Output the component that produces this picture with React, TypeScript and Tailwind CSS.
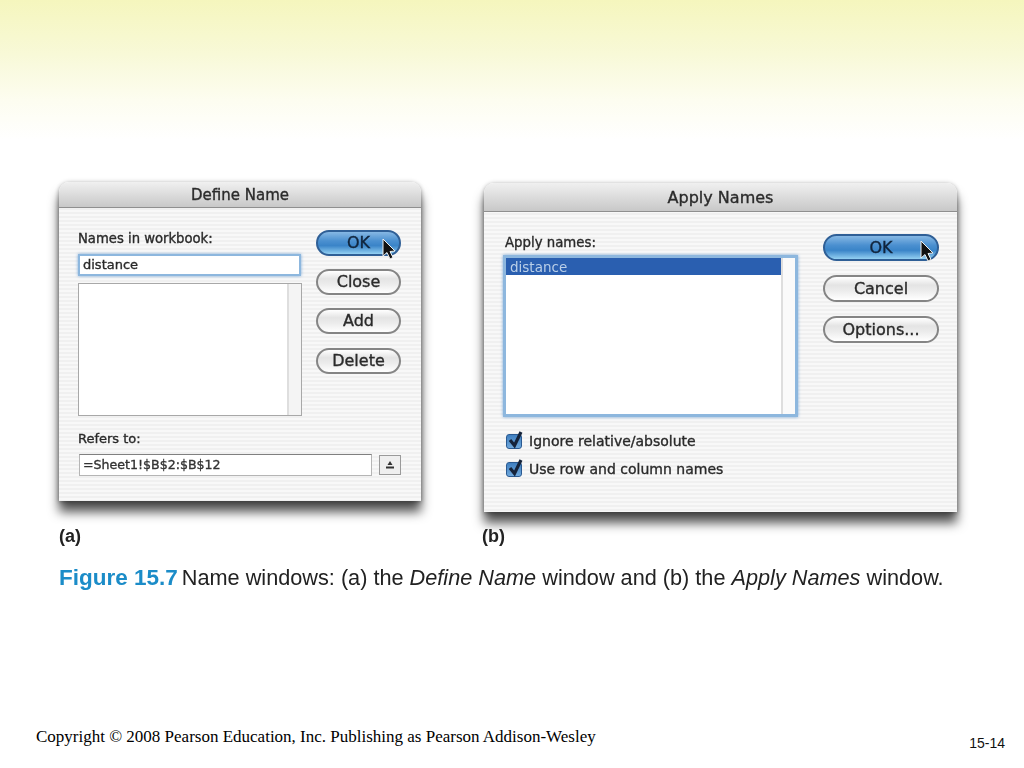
import React from 'react';

const ui = 'font-["DejaVu_Sans",sans-serif] [-webkit-text-stroke-width:0.35px]';
const stripes =
  'bg-[repeating-linear-gradient(180deg,#f8f8f8_0px,#f8f8f8_2px,#f0f0f0_2px,#f0f0f0_4px)]';
const windowShadow = 'shadow-[0_11px_11px_rgba(0,0,0,0.68),0_1px_5px_rgba(0,0,0,0.4)]';

const Cursor = ({ className }: { className: string }) => (
  <svg viewBox="0 0 16 24" className={`absolute ${className}`}>
    <path d="M2 1 L2 18 L6 14.5 L9 21 L12 19.5 L9 13.5 L14 13 Z" fill="#111" stroke="#eee" strokeWidth="1" />
  </svg>
);

const PillButton = ({ label, primary, className }: { label: string; primary?: boolean; className: string }) => (
  <div
    className={`relative flex items-center justify-center rounded-full border-2 text-[16px] ${className} ${
      primary
        ? 'border-[#2f5f96] bg-[linear-gradient(180deg,#86b8e4_0%,#4b90d0_40%,#3a84c8_62%,#93d0f2_100%)] text-[#10243c]'
        : 'border-[#858585] bg-[linear-gradient(180deg,#ffffff_0%,#e4e4e4_35%,#ececec_60%,#ffffff_100%)] text-[#2a2a2a]'
    }`}
  >
    {label}
  </div>
);

const CheckRow = ({ label }: { label: string }) => (
  <div className="flex h-[17px] items-center gap-[7px]">
    <div className="relative h-[15px] w-[16px] rounded-[3px] border border-[#2a5a92] bg-[linear-gradient(180deg,#3f7fc0_0%,#6fa8dc_100%)]">
      <svg viewBox="0 0 16 19" className="absolute left-0 top-[-5px] h-[19px] w-[16px]">
        <path d="M3 10 L7.5 15.5 L14 2" fill="none" stroke="#15233a" strokeWidth="3.2" />
      </svg>
    </div>
    <span className="text-[14px] text-[#2a2a2a]">{label}</span>
  </div>
);

const DefineName = () => (
  <div className={`flex h-[319px] w-[362px] shrink-0 flex-col rounded-t-[10px] ${windowShadow} ${stripes}`}>
    <div className="flex h-[26px] shrink-0 items-center justify-center rounded-t-[10px] border-b border-[#8f8f8f] bg-[linear-gradient(180deg,#f0f0f0_0%,#c8c8c8_100%)] pt-[2px] text-[15px] text-[#2b2b2b]">
      Define Name
    </div>
    <div className="flex flex-col pl-[19px] pr-[20px]">
      <div className="flex justify-between">
        <div className="w-[224px]">
          <div className="mt-[23px] text-[13.2px] leading-[16px] text-[#2a2a2a]">Names in workbook:</div>
          <div className="mt-[7px] flex h-[22px] w-[223px] items-center border-2 border-[#8db7de] bg-white pl-[3px] text-[13px] text-[#2a2a2a] shadow-[0_0_3px_#7aa8d8]">
            distance
          </div>
          <div className="mt-[7px] flex h-[133px] w-[224px] justify-end border border-[#a8a8a8] bg-white">
            <div className="w-[14px] border-l-2 border-[#dedede] bg-[#f4f4f4]" />
          </div>
        </div>
        <div className="flex w-[85px] flex-col gap-[13px] pt-[22px]">
          <PillButton primary label="OK" className="h-[26px] w-[85px]" />
          <PillButton label="Close" className="h-[26px] w-[85px]" />
          <PillButton label="Add" className="h-[26px] w-[85px]" />
          <PillButton label="Delete" className="mt-[1px] h-[26px] w-[85px]" />
        </div>
      </div>
      <div className="mt-[15px] text-[13px] leading-[16px] text-[#2a2a2a]">Refers to:</div>
      <div className="mt-[7px] flex items-center justify-between pl-[1px]">
        <div className="flex h-[22px] w-[293px] items-center border border-[#b5b5b5] border-t-[#808080] bg-white pl-[3px] text-[12.6px] text-[#333333]">
          =Sheet1!$B$2:$B$12
        </div>
        <div className="flex h-[20px] w-[22px] items-center justify-center border border-[#9a9a9a] bg-[#efefef]">
          <svg viewBox="0 0 12 10" className="h-[10px] w-[12px]">
            <path d="M6 1 L8.5 5 L3.5 5 Z" fill="#333" />
            <path d="M2 6.5 H10 V8.5 H2 Z" fill="#333" />
          </svg>
        </div>
      </div>
    </div>
  </div>
);

const ApplyNames = () => (
  <div className={`flex h-[329px] w-[473px] shrink-0 flex-col rounded-t-[10px] ${windowShadow} ${stripes}`}>
    <div className="flex h-[29px] shrink-0 items-center justify-center rounded-t-[10px] border-b border-[#8f8f8f] bg-[linear-gradient(180deg,#f0f0f0_0%,#c8c8c8_100%)] pt-[2px] text-[16px] text-[#2b2b2b]">
      Apply Names
    </div>
    <div className="flex justify-between pl-[19px] pr-[18px]">
      <div className="w-[295px]">
        <div className="ml-[2px] mt-[23px] text-[13.3px] leading-[16px] text-[#2a2a2a]">Apply names:</div>
        <div className="mt-[4px] flex h-[162px] w-[295px] justify-between border-[3px] border-[#8db7de] bg-white shadow-[0_0_3px_#7aa8d8]">
          <div className="h-[17px] w-[275px] bg-[#2a5fb0] pl-[4px] text-[13.5px] leading-[19px] text-[#b9cfe8] [-webkit-text-stroke-width:0px]">
            distance
          </div>
          <div className="w-[14px] border-l-2 border-[#dedede] bg-[#fafafa]" />
        </div>
        <div className="mt-[16px] flex flex-col gap-[11px] pl-[3px]">
          <CheckRow label="Ignore relative/absolute" />
          <CheckRow label="Use row and column names" />
        </div>
      </div>
      <div className="flex w-[116px] flex-col gap-[14px] pt-[22px]">
        <PillButton primary label="OK" className="h-[27px] w-[116px]" />
        <PillButton label="Cancel" className="h-[27px] w-[116px]" />
        <PillButton label="Options..." className="h-[27px] w-[116px]" />
      </div>
    </div>
  </div>
);

export default function App() {
  return (
    <div className="relative flex h-[768px] w-[1024px] flex-col overflow-hidden bg-[linear-gradient(180deg,#f5f6bd_0px,#f8f9d8_55px,#fdfdf0_100px,#ffffff_140px)]">
      <div className={`flex items-start pl-[59px] pt-[182px] blur-[0.4px] ${ui}`}>
        <DefineName />
        <div className="ml-[63px] mt-[1px]">
          <ApplyNames />
        </div>
      </div>
      <Cursor className="left-[381px] top-[238px] h-[24px] w-[16px]" />
      <Cursor className="left-[919px] top-[240px] h-[24px] w-[16px]" />

      <div className='mt-[14px] flex pl-[59px] font-["Liberation_Sans",sans-serif] text-[18px] leading-[20px] font-bold text-[#222222] blur-[0.3px]'>
        <span className="w-[423px]">(a)</span>
        <span>(b)</span>
      </div>
      <div className='mt-[20px] whitespace-nowrap pl-[59px] font-["Liberation_Sans",sans-serif] text-[21.7px] leading-[24px] text-[#222222] blur-[0.3px]'>
        <span className="mr-[4px] text-[22.5px] font-bold text-[#1b8cc8]">Figure 15.7</span>
        Name windows: (a) the <i>Define Name</i> window and (b) the <i>Apply Names</i> window.
      </div>

      <div className="mt-auto flex items-end justify-between pb-[17px] pl-[36px] pr-[19px]">
        <span className='pb-[5px] font-["Liberation_Serif",serif] text-[17px] leading-[18px] text-black'>
          Copyright © 2008 Pearson Education, Inc. Publishing as Pearson Addison-Wesley
        </span>
        <span className='font-["Liberation_Sans",sans-serif] text-[14px] leading-[16px] text-[#111111]'>15-14</span>
      </div>
    </div>
  );
}
